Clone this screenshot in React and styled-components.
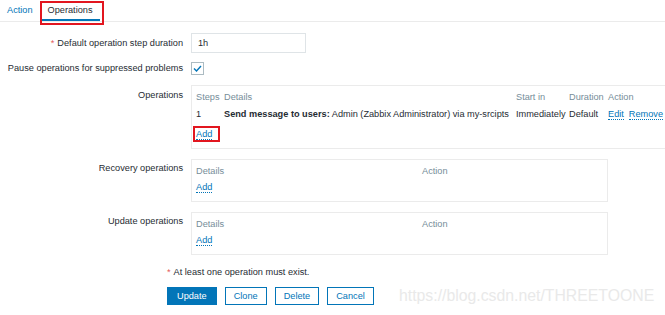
import React from "react";
import styled, { createGlobalStyle } from "styled-components";

const GlobalStyle = createGlobalStyle`
  html, body {
    margin: 0;
    padding: 0;
    background: #ffffff;
    overflow: hidden;
  }
  body {
    font-family: Arial, "Liberation Sans", sans-serif;
    font-size: 9.2px;
    color: #1f2c33;
  }
`;

const Page = styled.div`
  position: relative;
  width: 665px;
  height: 315px;
  overflow: hidden;
`;

const TabBar = styled.div`
  display: flex;
  height: 21px;
  border-bottom: 1px solid #ebebeb;
`;

const Tab = styled.div`
  padding: 4px 7px 0 7px;
  line-height: 13px;
  color: ${(p) => (p.$active ? "#1f2c33" : "#0275b8")};
  border-bottom: 2px solid ${(p) => (p.$active ? "#0275b8" : "transparent")};
  height: 15px;
  margin-left: ${(p) => p.$ml || 0}px;
`;

const Marker = styled.div`
  position: absolute;
  border: 2px solid #e2161f;
  pointer-events: none;
`;

const Form = styled.div`
  padding-top: 11px;
`;

const Row = styled.div`
  display: flex;
  align-items: ${(p) => (p.$top ? "flex-start" : "center")};
  margin-top: ${(p) => p.$mt || 0}px;
`;

const Label = styled.div`
  width: 183px;
  flex: none;
  text-align: right;
  padding-right: 8px;
  box-sizing: content-box;
  line-height: 14px;
  white-space: nowrap;
  padding-top: ${(p) => p.$pt || 0}px;
`;

const Star = styled.span`
  color: #e45959;
  margin-right: 3px;
`;

const Input = styled.div`
  width: 101px;
  height: 18px;
  border: 1px solid #dfe4e7;
  padding: 0 6px;
  line-height: 18px;
`;

const Check = styled.div`
  width: 11px;
  height: 11px;
  border: 1px solid #acbbc2;
  display: flex;
  align-items: center;
  justify-content: center;
`;

const Box = styled.div`
  border: 1px solid #ebebeb;
  padding: 4px 4px 7px 4px;
  width: ${(p) => p.$w}px;
  flex: none;
  box-sizing: border-box;
`;

const Grid = styled.div`
  display: grid;
  grid-template-columns: ${(p) => p.$cols};
  line-height: 14px;
  white-space: nowrap;
`;

const Head = styled.div`
  color: #768d99;
`;

const Cell = styled.div`
  margin-top: 3px;
`;

const Link = styled.span`
  color: #0275b8;
  border-bottom: 1px dotted #0275b8;
  margin-right: ${(p) => p.$mr || 0}px;
`;

const AddLine = styled.div`
  margin-top: ${(p) => p.$mt}px;
  line-height: 14px;
  position: relative;
`;

const Note = styled.div`
  margin-top: 10px;
  padding-left: 167px;
  line-height: 14px;
`;

const Buttons = styled.div`
  display: flex;
  gap: 8px;
  padding-left: 167px;
  margin-top: 8px;
`;

const Button = styled.div`
  height: 16px;
  line-height: 16px;
  padding: 0 ${(p) => p.$px}px;
  border: 1px solid #0275b8;
  background: ${(p) => (p.$primary ? "#0275b8" : "#ffffff")};
  color: ${(p) => (p.$primary ? "#ffffff" : "#0275b8")};
`;

const Watermark = styled.div`
  position: absolute;
  left: 399px;
  top: 287px;
  font-size: 15.8px;
  color: #e9e9e9;
  white-space: nowrap;
`;

export default function App() {
  return (
    <>
      <GlobalStyle />
      <Page>
        <TabBar>
          <Tab>Action</Tab>
          <Tab $active $ml={1}>Operations</Tab>
        </TabBar>
        <Marker style={{ left: 40, top: 1, width: 60, height: 20 }} />
        <Form>
          <Row>
            <Label>
              <Star>*</Star>Default operation step duration
            </Label>
            <Input>1h</Input>
          </Row>
          <Row $mt={8}>
            <Label>Pause operations for suppressed problems</Label>
            <Check>
              <svg width="9" height="7" viewBox="0 0 9 7">
                <path d="M1 3.5 L3.5 6 L8 1" fill="none" stroke="#0275b8" strokeWidth="1.4" />
              </svg>
            </Check>
          </Row>
          <Row $top $mt={10}>
            <Label $pt={3}>Operations</Label>
            <Box $w={520}>
              <Grid $cols="28px 292px 53px 39px auto">
                <Head>Steps</Head>
                <Head>Details</Head>
                <Head>Start in</Head>
                <Head>Duration</Head>
                <Head>Action</Head>
                <Cell>1</Cell>
                <Cell>
                  <b>Send message to users:</b> Admin (Zabbix Administrator) via my-srcipts
                </Cell>
                <Cell>Immediately</Cell>
                <Cell>Default</Cell>
                <Cell>
                  <Link $mr={5}>Edit</Link>
                  <Link>Remove</Link>
                </Cell>
              </Grid>
              <AddLine $mt={6}>
                <Link>Add</Link>
                <Marker style={{ left: -3, top: -1, width: 23, height: 12 }} />
              </AddLine>
            </Box>
          </Row>
          <Row $top $mt={10}>
            <Label $pt={2}>Recovery operations</Label>
            <Box $w={417}>
              <Grid $cols="226px auto">
                <Head>Details</Head>
                <Head>Action</Head>
              </Grid>
              <AddLine $mt={2}>
                <Link>Add</Link>
              </AddLine>
            </Box>
          </Row>
          <Row $top $mt={10}>
            <Label $pt={2}>Update operations</Label>
            <Box $w={417}>
              <Grid $cols="226px auto">
                <Head>Details</Head>
                <Head>Action</Head>
              </Grid>
              <AddLine $mt={2}>
                <Link>Add</Link>
              </AddLine>
            </Box>
          </Row>
          <Note>
            <Star>*</Star>At least one operation must exist.
          </Note>
          <Buttons>
            <Button $primary $px={9}>Update</Button>
            <Button $px={8}>Clone</Button>
            <Button $px={8}>Delete</Button>
            <Button $px={8}>Cancel</Button>
          </Buttons>
        </Form>
        <Watermark>https://blog.csdn.net/THREETOONE</Watermark>
      </Page>
    </>
  );
}
